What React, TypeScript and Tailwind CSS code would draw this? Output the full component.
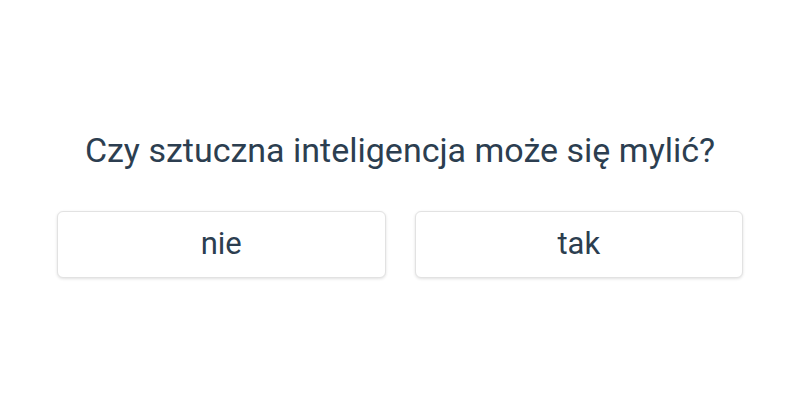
export default function App() {
  const answers = ['nie', 'tak'];
  return (
    <div className="w-[800px] h-[400px] bg-white flex flex-col items-center pt-[130px] font-['Roboto',sans-serif] text-[#2c3e50]">
      <h1 className="text-[34px] leading-[40px] text-center">
        Czy sztuczna inteligencja może się mylić?
      </h1>
      <div className="mt-[41px] grid grid-cols-2 gap-[29px] w-[686px]">
        {answers.map((a) => (
          <button
            key={a}
            className="h-[67px] bg-white border border-[#e2e2e2] rounded-[6px] shadow-[0_1px_3px_rgba(0,0,0,0.12)] text-[31px] text-[#2c3e50]"
          >
            {a}
          </button>
        ))}
      </div>
    </div>
  );
}
